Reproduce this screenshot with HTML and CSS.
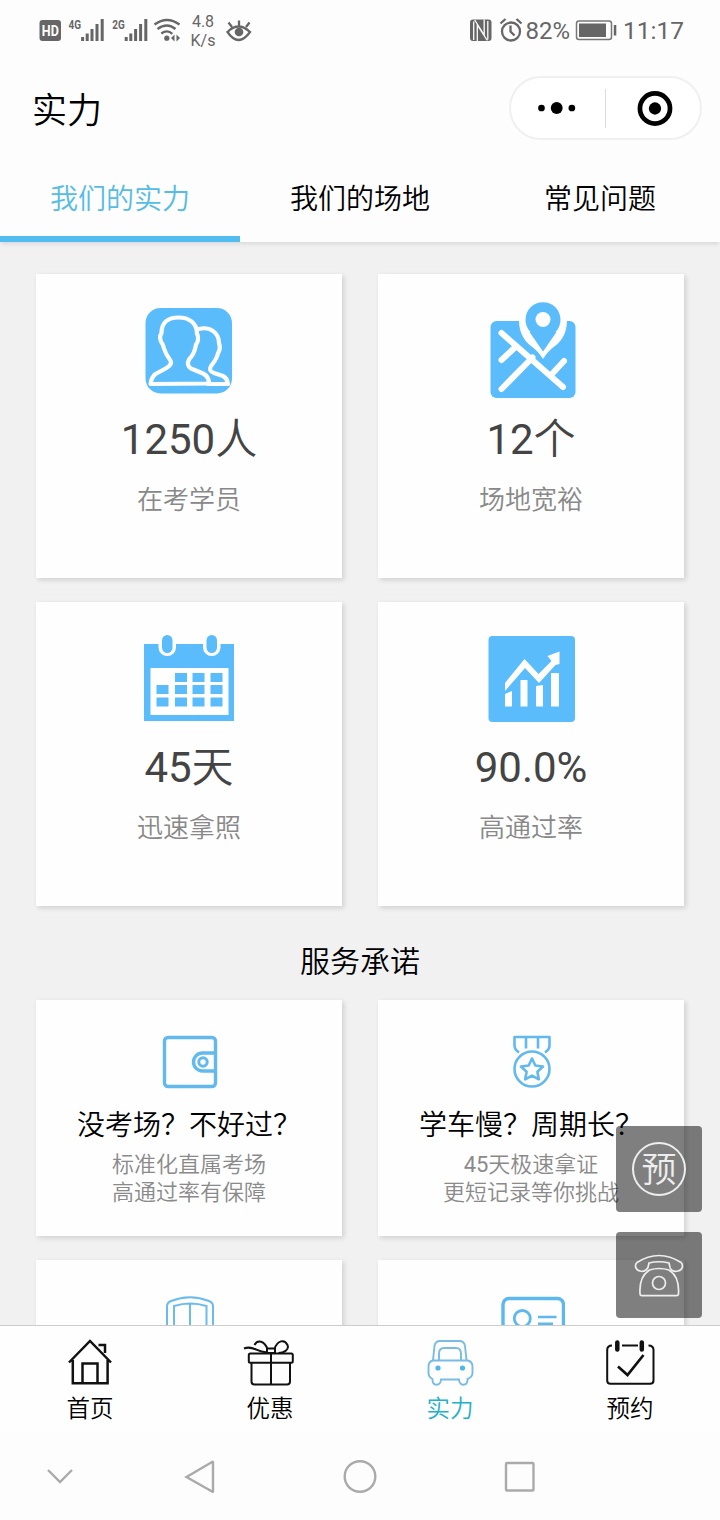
FILE: index.html
```html
<!DOCTYPE html>
<html lang="zh-CN">
<head>
<meta charset="utf-8">
<title>实力</title>
<link rel="stylesheet" href="styles.css">
</head>
<body>
<div class="phone">
  <header class="status">
    <svg class="st-hd" width="24" height="24" viewBox="38 18 24 24"><rect x="39.500" y="20" width="21.500" height="21" rx="3" fill="#666"/><text x="50.300" y="36" class="hd-text" text-anchor="middle" textLength="17" lengthAdjust="spacingAndGlyphs">HD</text></svg>
    <svg class="st-sig" width="40" height="28" viewBox="66 16 40 28"><text x="68.500" y="28.500" class="net-text" textLength="12.500" lengthAdjust="spacingAndGlyphs">4G</text><path d="M82.600 37v4M87.200 33.500V41M92 29v12M97 24v17M102.200 19v22" class="sig"/></svg>
    <svg class="st-sig" width="40" height="28" viewBox="110 16 40 28"><text x="112.200" y="28.500" class="net-text" textLength="12.500" lengthAdjust="spacingAndGlyphs">2G</text><path d="M126.200 37v4M130.800 33.500V41M135.600 29v12M140.600 24v17M145.800 19v22" class="sig"/></svg>
    <svg class="st-wifi" width="30" height="28" viewBox="152 16 30 28" fill="none" stroke="#666" stroke-width="2.300"><path d="M154.500 24.500q12.500-9 25 0M157.500 29q9.500-7 18 0M161.300 33.500q6-4.500 11 .3"/><circle cx="166.800" cy="38.200" r="2.600" fill="#666" stroke="none"/><path d="M174.500 34.500v7l-3.500-3.500zM176.500 34.500v7l3.500-3.500z" fill="#666" stroke="none"/></svg>
    <div class="speed"><span>4.8</span><span>K/s</span></div>
    <svg class="st-eye" width="28" height="28" viewBox="225 16 28 28" fill="none" stroke="#666" stroke-width="2.300"><path d="M227.500 32q11-11 22.500 0q-11.500 16-22.500 0zM239 20.500v5M228.500 22.500l3.500 4.500M249.500 22.500l-3.500 4.500"/><circle cx="239" cy="32" r="4.300" fill="#666" stroke="none"/></svg>
    <span class="spacer"></span>
    <svg class="st-nfc" width="24" height="24" viewBox="470 18 24 24"><rect x="471" y="19.500" width="21.500" height="21.500" rx="3" fill="#666"/><path d="M474.700 40V21.500M478.300 41V25l10 15.500M488.800 21v18.500M485.200 19.500V35l-9.500-15" fill="none" stroke="#fdfdfd" stroke-width="1.300"/></svg>
    <svg class="st-alarm" width="24" height="26" viewBox="500 17 24 26" fill="none" stroke="#666" stroke-width="2.300"><circle cx="512" cy="31.500" r="9"/><path d="M511.500 25.500v6l4 4M501.500 23.500l5-4.500M522.500 23.500l-5-4.500"/></svg>
    <span class="pct">82%</span>
    <svg class="st-bat" width="42" height="22" viewBox="576 19 42 22"><rect x="577.500" y="21" width="35" height="18.500" rx="2.500" fill="none" stroke="#777" stroke-width="1.500"/><rect x="580" y="23.500" width="27" height="13.500" fill="#666"/><rect x="614.800" y="25" width="2.500" height="10.500" fill="#666"/></svg>
    <span class="time">11:17</span>
  </header>

  <div class="navbar">
    <h1 class="nav-title">实力</h1>
    <div class="capsule">
      <svg width="95" height="60" viewBox="510.500 78 95 60"><circle cx="541.300" cy="108" r="3.400"/><circle cx="556.700" cy="108" r="6"/><circle cx="572" cy="108" r="3.400"/></svg>
      <span class="cap-line"></span>
      <svg width="95" height="60" viewBox="605.500 78 95 60"><circle cx="655" cy="108.500" r="15.200" fill="none" stroke="#000" stroke-width="4.800"/><circle cx="655" cy="108.500" r="6.200"/></svg>
    </div>
  </div>

  <nav class="tabs">
    <div class="tab tab-on">我们的实力</div>
    <div class="tab">我们的场地</div>
    <div class="tab">常见问题</div>
  </nav>

  <main class="content">
    <section class="grid stats">
      <div class="card stat">
        <svg width="100" height="104" viewBox="139 298 100 104"><rect x="145.500" y="308" width="86.500" height="85.500" rx="15" fill="#5bbcfc"/><g fill="none" stroke="#fff" stroke-width="4.200" stroke-linejoin="round" stroke-linecap="round"><path d="M150.500 384q1-7 5-10l11-6q7-4 3-9c-5-6-5-10-7-15c-3-4-3-8-1-11c0-11 7-15.500 17-15.500s18.500 5 18.500 16c2 4 1 9-1 11c-1 7-3 11-7 15q-3 6 2 9l12 5q6 3 6 10z"/><path d="M199 329c11-3 20 4 20 14q2 6-1 10c-1 6-4 9-7 13q-3 5 3 7l9 3q4 2 5 8h-20"/></g></svg>
        <strong class="num">1250人</strong>
        <span class="label">在考学员</span>
      </div>
      <div class="card stat">
        <svg width="100" height="104" viewBox="481 298 100 104"><rect x="490.500" y="321" width="85" height="77" rx="6" fill="#5bbcfc"/><path d="M543 359q-5-8-12-13q-12-9-12-26h48q0 17-12 26q-7 5-12 13z" fill="#fefefe"/><path d="M543 351.500l-13.500-19.500h27z" fill="#5bbcfc"/><circle cx="543" cy="319.700" r="17.500" fill="#5bbcfc"/><circle cx="543" cy="319.500" r="7.500" fill="#fff"/><path d="M501.500 333l61.500 54M501.500 389l31-31.500M501.500 360l14-13M552 374l12-13" fill="none" stroke="#fff" stroke-width="6" stroke-linecap="round"/></svg>
        <strong class="num">12个</strong>
        <span class="label">场地宽裕</span>
      </div>
      <div class="card stat">
        <svg width="100" height="104" viewBox="139 626 100 104" fill="#5bbcfc"><path d="M144 644h90v77h-90z"/><path d="M150.500 668h78v47h-78z" fill="#fff"/><rect x="158.500" y="633" width="17.500" height="23" rx="8.700" fill="#fff"/><rect x="203" y="633" width="17.500" height="23" rx="8.700" fill="#fff"/><rect x="162" y="635" width="10.500" height="18" rx="5.200"/><rect x="206.500" y="635" width="10.500" height="18" rx="5.200"/><path d="M175 673h12v9h-12zM192.500 673h12v9h-12zM210.500 673h12v9h-12zM156.500 685h12v9h-12zM175 685h12v9h-12zM192.500 685h12v9h-12zM210.500 685h12v9h-12zM156.500 697.500h12v9h-12zM175 697.500h12v9h-12zM192.500 697.500h12v9h-12zM210.500 697.500h12v9h-12z"/></svg>
        <strong class="num">45天</strong>
        <span class="label">迅速拿照</span>
      </div>
      <div class="card stat">
        <svg width="100" height="104" viewBox="481 626 100 104" fill="#fff"><rect x="488.500" y="636" width="86.500" height="86" rx="4" fill="#5bbcfc"/><path d="M505 694l7-3v15.500h-7zM520.500 680h7v26.500h-7zM536 686l7-1v21.500h-7zM551 673h8v33.500h-8z"/><path d="M505 691v-8l19.500-24l14 15l13-13-4-5 12-4.500v12.500l-4 1-16.500 18-14-15z"/></svg>
        <strong class="num">90.0%</strong>
        <span class="label">高通过率</span>
      </div>
    </section>

    <h2 class="section-title">服务承诺</h2>

    <section class="grid">
      <div class="card promise">
        <svg width="64" height="60" viewBox="157 1032 64 60" fill="none" stroke="#62b9ee" stroke-width="3.400"><rect x="164.500" y="1037.500" width="51" height="49" rx="3.500"/><path d="M215 1053h-12.500a9 9 0 0 0 0 18H215"/><circle cx="203" cy="1062" r="4.200" stroke-width="3"/></svg>
        <h3>没考场？不好过？</h3>
        <p>标准化直属考场<br>高通过率有保障</p>
      </div>
      <div class="card promise">
        <svg width="64" height="60" viewBox="499 1032 64 60" fill="none" stroke="#62b9ee" stroke-width="2.600" stroke-linejoin="round"><path d="M519 1052.500q-4.500-3-4.500-7v-8.500h35v8.500q0 4-4.500 7M526 1037v11.500M538 1037v11.500"/><circle cx="532" cy="1069" r="17.500"/><path d="M532 1058.500l3.300 7 7.700 1-5.600 5.200 1.400 7.600-6.800-3.700-6.800 3.700 1.400-7.600-5.600-5.200 7.700-1z"/></svg>
        <h3>学车慢？周期长？</h3>
        <p>45天极速拿证<br>更短记录等你挑战</p>
      </div>
      <div class="card promise">
        <svg width="64" height="60" viewBox="157 1292 64 60" fill="none" stroke="#6bbcec" stroke-width="2"><path d="M167 1350v-43.500q0-4 4-5.500q19-7.500 38 0q4 1.500 4 5.500v43.500z"/><path d="M174 1345v-39q16-5 32.500 0v39zM190 1303.500v42"/></svg>
      </div>
      <div class="card promise">
        <svg width="68" height="60" viewBox="497 1292 68 60" fill="none" stroke="#5db8ee" stroke-width="3.400"><rect x="503" y="1298.500" width="60.500" height="48" rx="6"/><circle cx="522.300" cy="1318.500" r="8" stroke-width="2.800"/><path d="M538 1317h18.500M538 1323.800h15" stroke-width="2.600"/><path d="M510 1338q12-16 24 0" stroke-width="2.800"/></svg>
      </div>
    </section>
  </main>

  <div class="floats">
    <div class="float-btn"><span class="book">预</span></div>
    <div class="float-btn">
      <svg width="54" height="50" viewBox="632 1250 54 50" fill="none" stroke="#eee" stroke-width="1.700"><path d="M648 1267.500q-3 5-8 3.500c-5-1-5.500-6-3-8.500q22-14 44 0c2.500 2.500 2 7.500-3 8.500q-6 1.500-8-3.500l-1-4.500q-10-2.500-20 0z"/><path d="M640 1293.500q-1-17 9.500-23.500q9.500-3 19.500 0q10.500 6.500 9.500 23.500q0 2.200-2 2.200h-34.500q-2 0-2-2.200z"/><circle cx="659" cy="1283" r="6.500"/></svg>
    </div>
  </div>

  <footer class="tabbar">
    <div class="item">
      <svg width="54" height="50" viewBox="63 1338 54 50" fill="none" stroke="#111" stroke-width="2.500"><path d="M69 1362.500l21-21.500 21 21.500M72.800 1360v23.300h34.800V1360M82.500 1383v-19.500H97.500V1383M98.500 1345h6.500v8"/></svg>
      <span>首页</span>
    </div>
    <div class="item">
      <svg width="54" height="50" viewBox="243 1338 54 50" fill="none" stroke="#111" stroke-width="2"><rect x="248.800" y="1353.500" width="44" height="9.200" rx="1.500"/><path d="M251.500 1363v18.500q0 3 3 3h32.500q3 0 3-3V1363M271 1353.500v31M267 1348.500h8v4.500h-8zM267.500 1349c-3-8-10-10-13-4M274.500 1349c3-9 10-10 13-4c2 5-4 8-9 8M244 1348.500c9-4 14 5 23.500 3.500"/></svg>
      <span>优惠</span>
    </div>
    <div class="item item-on">
      <svg width="54" height="50" viewBox="423 1338 54 50" fill="none" stroke="#78bce4" stroke-width="1.900"><path d="M433 1360l1.500-14q.7-5 6-5h18.500q5.300 0 6 5l1.500 14M439 1360v-6q0-6 5-6h12q5 0 5 6v6"/><path d="M433 1360.500h34.500q5 1 5 6v6.500q0 4-5 6v.5c0 7-8 7-8.500 0h-18c-.5 7-8.500 7-8.500 0v-.5q-4-2-4-6v-6.500q0-5 4.500-6z"/><circle cx="438" cy="1368" r="2.600" fill="#4db6ee" stroke="none"/><circle cx="462.500" cy="1368" r="2.600" fill="#4db6ee" stroke="none"/></svg>
      <span>实力</span>
    </div>
    <div class="item">
      <svg width="54" height="50" viewBox="603 1338 54 50" fill="none" stroke="#111" stroke-width="2"><path d="M612 1345.500q-4.800 0-4.800 4.500v30.500q0 3.300 3.300 3.300h39.500q3.500 0 3.500-3.300V1350q0-4.500-5-4.500M622 1345.500h16"/><path d="M617.300 1342.500v7M641.800 1342.500v7" stroke-width="4.500" stroke-linecap="round"/><path d="M618 1366.500l9.500 8.500 16-20" stroke-width="2.700"/></svg>
      <span>预约</span>
    </div>
  </footer>

  <div class="sysnav">
    <svg width="30" height="36" viewBox="45 1459 30 36"><path d="M48 1470l12 12 12-12"/></svg>
    <svg width="36" height="36" viewBox="182 1459 36 36"><path d="M186.500 1477l26-15.200q.5-.3.500.5v29q0 .8-.5.500z"/></svg>
    <svg width="36" height="36" viewBox="342 1459 36 36"><circle cx="360" cy="1476.500" r="15.300"/></svg>
    <svg width="36" height="36" viewBox="502 1459 36 36"><rect x="506" y="1463" width="27.500" height="27.500" rx="1"/></svg>
  </div>
</div>
</body>
</html>
```
FILE: styles.css
```css
* { box-sizing: border-box; }

body {
  margin: 0;
  background: #fdfdfd;
  font-family: Roboto, "Noto Sans CJK SC DemiLight", "Noto Sans CJK SC", sans-serif;
  color: #000;
}

h1, h2, h3, p { margin: 0; font-weight: 400; }
svg { display: block; flex: none; }

.phone {
  position: relative;
  display: flex;
  flex-direction: column;
  width: 720px;
  height: 1520px;
  overflow: hidden;
}

/* status bar */
.status {
  display: flex;
  align-items: center;
  height: 60px;
  padding: 0 36px 0 38px;
  color: #666;
  font-size: 25px;
}
.hd-text { font: 700 15px Roboto, sans-serif; fill: #fff; }
.net-text { font: 700 12.5px Roboto, sans-serif; fill: #666; }
.sig { stroke: #666; stroke-width: 3; fill: none; }
.st-sig { margin-left: 4px; }
.st-wifi { margin-left: 2px; }
.speed {
  display: flex;
  flex-direction: column;
  align-items: center;
  width: 26px;
  margin: 2px 0 0 8px;
  font-size: 16px;
  line-height: 19px;
}
.st-eye { margin-left: 9px; }
.spacer { flex: 1; }
.st-alarm { margin-left: 6px; }
.pct { margin: 1px 0 0 2px; font-size: 24px; }
.st-bat { margin: 0 6px 0 5px; }
.time { margin-top: 1px; font-size: 24.5px; }

/* title bar */
.navbar {
  display: flex;
  align-items: center;
  justify-content: space-between;
  height: 96px;
  padding: 0 18px 0 32px;
}
.nav-title { font-size: 35px; line-height: 50px; margin-top: 7px; }
.capsule {
  display: flex;
  align-items: center;
  width: 193px;
  height: 64px;
  border: 2px solid #f0f0f0;
  border-radius: 32px;
  background: #fff;
}
.capsule svg { width: 94px; }
.cap-line { width: 1px; height: 39px; background: #ddd; }

/* top tabs */
.tabs {
  position: relative;
  display: flex;
  height: 86px;
  flex: none;
  box-shadow: 0 3px 4px -1px rgba(0, 0, 0, .1);
}
.tab {
  flex: 1;
  padding-top: 22px;
  border-bottom: 6px solid transparent;
  font-size: 28px;
  line-height: 44px;
  text-align: center;
}
.tab-on { color: #55bce6; border-bottom-color: #50bcf0; }

/* scrolling content */
.content {
  flex: none;
  height: 1083px;
  padding: 32px 36px 0;
  background: #f1f1f1;
  overflow: hidden;
}
.grid {
  display: grid;
  grid-template-columns: 306px 306px;
  gap: 24px 36px;
}
.card {
  display: flex;
  flex-direction: column;
  align-items: center;
  background: #fefefe;
  box-shadow: 2px 2px 5px rgba(0, 0, 0, .14);
}
.stat { height: 304px; padding-top: 24px; }
.num {
  margin-top: 7px;
  font-size: 42px;
  font-weight: 400;
  line-height: 62px;
  color: #444;
}
.label {
  margin-top: 10px;
  font-size: 26px;
  line-height: 38px;
  color: #888;
}
.section-title {
  height: 94px;
  padding-top: 34px;
  font-size: 30px;
  line-height: 44px;
  text-align: center;
}
.promise { height: 236px; padding-top: 32px; }
.promise h3 { margin-top: 14px; font-size: 28px; line-height: 40px; white-space: nowrap; }
.promise p {
  margin-top: 5px;
  font-size: 22px;
  line-height: 28px;
  text-align: center;
  color: #8a8a8a;
}

/* floating shortcuts over the cards */
.floats {
  position: absolute;
  top: 1126px;
  right: 18px;
  display: flex;
  flex-direction: column;
  gap: 20px;
}
.float-btn {
  display: flex;
  align-items: center;
  justify-content: center;
  width: 86px;
  height: 86px;
  border-radius: 4px;
  background: rgba(0, 0, 0, .5);
}
.book {
  width: 54px;
  height: 54px;
  border: 2.500px solid #eee;
  border-radius: 50%;
  color: #eee;
  font-size: 35px;
  font-weight: 500;
  line-height: 54px;
  text-align: center;
}

/* bottom tab bar */
.tabbar {
  position: relative;
  display: flex;
  flex: none;
  height: 108px;
  border-top: 1px solid #ccc;
  background: #fefefe;
}
.item {
  display: flex;
  flex: 1;
  flex-direction: column;
  align-items: center;
  padding-top: 12px;
  font-size: 23.5px;
  line-height: 34px;
}
.item span { margin-top: 4px; }
.item-on span { color: #22b0cc; }

/* system navigation */
.sysnav {
  display: flex;
  align-items: flex-start;
  padding: 26px 0 0 45px;
}
.sysnav svg { fill: none; stroke: #aaa; stroke-width: 2.400; }
.sysnav svg:nth-child(2) { margin-left: 107px; }
.sysnav svg:nth-child(n+3) { margin-left: 124px; }
```
